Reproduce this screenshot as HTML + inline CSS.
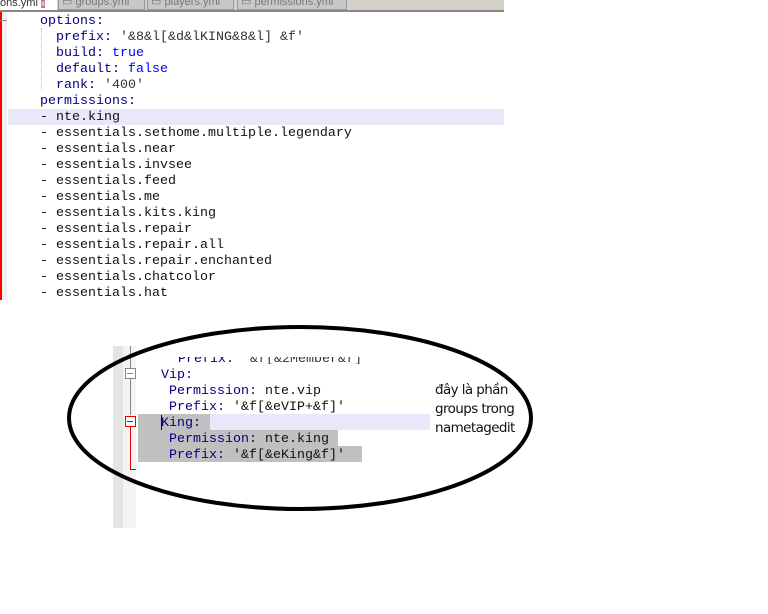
<!DOCTYPE html>
<html><head><meta charset="utf-8"><style>
html,body{margin:0;padding:0;background:#fff;width:768px;height:614px;overflow:hidden;position:relative}
.m{font-family:"Liberation Mono",monospace;font-size:13.33px;line-height:16px;white-space:pre;position:absolute}
.k{color:#000080}.b{color:#0000ff}.s{color:#333}.t{color:#111}
.abs{position:absolute}
</style></head><body>
<div class="abs" style="left:0;top:0;width:504px;height:10px;background:#d4d0c8"></div>
<div class="abs" style="left:0;top:0;width:57px;height:10px;background:#fff;font:11px 'Liberation Sans',sans-serif;line-height:6px;overflow:hidden;color:#333">ons.yml <span style="background:#c9708a;color:#fff;font-size:8px">x</span></div>
<div class="abs" style="left:58px;top:0;width:85px;height:9px;background:#c8c8c8;border:1px solid #999;border-top:0;font:11px 'Liberation Sans',sans-serif;line-height:4px;color:#777;overflow:hidden">&nbsp;▭ groups.yml</div>
<div class="abs" style="left:147px;top:0;width:85px;height:9px;background:#c8c8c8;border:1px solid #999;border-top:0;font:11px 'Liberation Sans',sans-serif;line-height:4px;color:#777;overflow:hidden">&nbsp;▭ players.yml</div>
<div class="abs" style="left:237px;top:0;width:108px;height:9px;background:#c8c8c8;border:1px solid #999;border-top:0;font:11px 'Liberation Sans',sans-serif;line-height:4px;color:#777;overflow:hidden">&nbsp;▭ permissions.yml</div>
<div class="abs" style="left:0;top:10px;width:504px;height:2px;background:#888"></div>
<div class="abs" style="left:0;top:12px;width:2px;height:288px;background:#f00"></div>
<div class="abs" style="left:2px;top:12px;width:5px;height:288px;background:#f0f0f0"></div>
<div class="abs" style="left:0;top:20px;width:7px;height:1px;background:#888"></div>
<div class="abs" style="left:41px;top:28px;width:0;height:62px;border-left:1px dotted #bbb"></div>
<div class="abs" style="left:8px;top:109px;width:496px;height:16px;background:#e8e8fa"></div>
<div class="m" style="left:40px;top:14px"><span class="k">options:</span>
<span class="k">  prefix:</span> <span class="s">'&amp;8&amp;l[&amp;d&amp;lKING&amp;8&amp;l] &amp;f'</span>
<span class="k">  build:</span> <span class="b">true</span>
<span class="k">  default:</span> <span class="b">false</span>
<span class="k">  rank:</span> <span class="s">'400'</span>
<span class="k">permissions:</span>
<span class="t">- nte.king
- essentials.sethome.multiple.legendary
- essentials.near
- essentials.invsee
- essentials.feed
- essentials.me
- essentials.kits.king
- essentials.repair
- essentials.repair.all
- essentials.repair.enchanted
- essentials.chatcolor
- essentials.hat</span></div>
<div class="abs" style="left:113px;top:346px;width:10px;height:182px;background:#e4e4e4"></div>
<div class="abs" style="left:123px;top:346px;width:13px;height:182px;background:#f4f4f4"></div>
<div class="abs" style="left:130px;top:346px;width:1px;height:22px;background:#888"></div>
<div class="abs" style="left:125px;top:368px;width:9px;height:9px;border:1px solid #888;background:#fff"></div>
<div class="abs" style="left:127px;top:373px;width:6px;height:1px;background:#888"></div>
<div class="abs" style="left:130px;top:379px;width:1px;height:36px;background:#888"></div>
<div class="abs" style="left:125px;top:416px;width:9px;height:9px;border:1px solid #e00;background:#fff"></div>
<div class="abs" style="left:127px;top:421px;width:6px;height:1px;background:#e00"></div>
<div class="abs" style="left:130px;top:427px;width:1px;height:42px;background:#e00"></div>
<div class="abs" style="left:130px;top:469px;width:6px;height:1px;background:#e00"></div>
<div class="abs" style="left:138px;top:414px;width:292px;height:16px;background:#e8e8fa"></div>
<div class="abs" style="left:138px;top:414px;width:72px;height:16px;background:#c0c0c0"></div>
<div class="abs" style="left:138px;top:430px;width:200px;height:16px;background:#c0c0c0"></div>
<div class="abs" style="left:138px;top:446px;width:224px;height:16px;background:#c0c0c0"></div>
<div class="abs" style="left:161px;top:415px;width:1px;height:15px;background:#000080"></div>
<div class="m" style="left:162px;top:352px;height:12px;overflow:hidden;clip-path:inset(5px 0 0 0)"><span class="k">  Prefix:</span> <span class="s">'&amp;f[&amp;2Member&amp;f]'</span></div>
<div class="m" style="left:161px;top:368px"><span class="k">Vip:</span>
<span class="k"> Permission:</span> <span class="t">nte.vip</span>
<span class="k"> Prefix:</span> <span class="t">'&amp;f[&amp;eVIP+&amp;f]'</span>
<span class="k">King:</span>
<span class="k"> Permission:</span> <span class="t">nte.king</span>
<span class="k"> Prefix:</span> <span class="t">'&amp;f[&amp;eKing&amp;f]'</span></div>
<div class="abs" style="left:435px;top:381px;font:13.5px 'DejaVu Sans','Liberation Sans',sans-serif;line-height:19px;color:#111;letter-spacing:-0.6px">đây là phần<br>groups trong<br>nametagedit</div>
<svg class="abs" style="left:0;top:0" width="768" height="614"><ellipse cx="300" cy="418" rx="231" ry="91" fill="none" stroke="#000" stroke-width="4"/></svg>
</body></html>
